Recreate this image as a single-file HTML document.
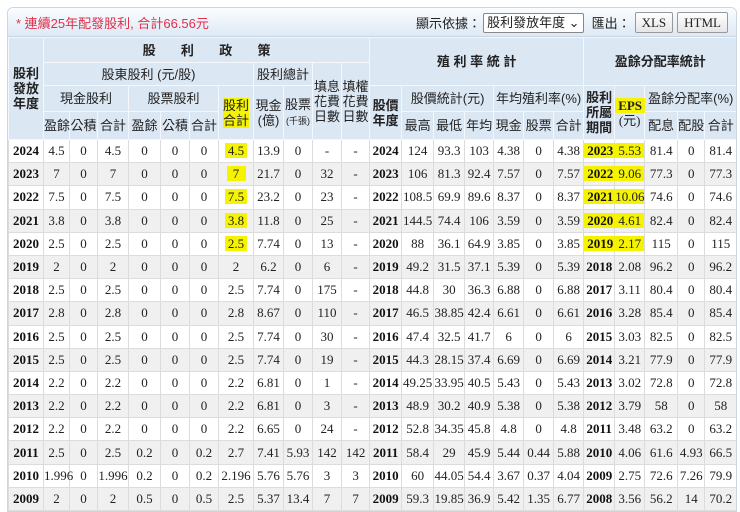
<!DOCTYPE html>
<html><head><meta charset="utf-8"><style>
body{margin:0;background:#fff;width:740px;height:511px;overflow:hidden;font-family:"Liberation Serif","Noto Serif CJK SC",serif;}
.box{position:absolute;left:7px;top:7px;width:728px;border:1px solid #c9d6e3;border-radius:6px 6px 0 0;overflow:hidden;}
.bar{height:28px;background:linear-gradient(#fbfdff,#dde9f5);position:relative;border-bottom:1px solid #c8d6e4;}
.bar .t{position:absolute;left:8px;top:5px;color:#e0304a;font-size:13px;font-family:"Liberation Sans","Noto Sans CJK TC",sans-serif;}
.bar .r{position:absolute;right:8px;top:4px;font-size:13px;font-family:"Liberation Sans","Noto Sans CJK TC",sans-serif;color:#222;display:flex;align-items:center;}
.sel{border:1px solid #888;background:#fff;padding:0 3px;height:18px;line-height:18px;margin:0 8px 0 2px;border-radius:2px;}
.btn{border:1px solid #999;background:linear-gradient(#fff,#e6e6e6);padding:0 6px;height:19px;line-height:19px;margin-left:4px;font-family:"Liberation Serif",serif;border-radius:2px;}
table{border-collapse:collapse;table-layout:fixed;width:728px;}
th{background:#dbe7f3;border:1px solid #f4f8fc;font-weight:normal;font-size:13px;color:#222;font-family:"Liberation Sans","Noto Sans CJK TC",sans-serif;line-height:15px;padding:0;white-space:nowrap;overflow:visible;}
th.b{font-weight:bold}
td{border:1px solid #dcdcdc;text-align:center;font-size:13px;height:22.2px;padding:0;color:#222;white-space:nowrap;}
td:first-child,td.y{font-weight:bold;color:#111}
tr.g td{background:#f0f0f0}
.h{background:#f5f300;padding:0 3px}
small{font-size:9px}
</style></head><body>
<div class="box">
<div class="bar"><span class="t">* 連續25年配發股利, 合計66.56元</span>
<span class="r">顯示依據：<span class="sel">股利發放年度 ⌄</span>匯出：<span class="btn">XLS</span><span class="btn">HTML</span></span></div>
<table>
<colgroup><col style="width:35px"><col style="width:26px"><col style="width:28px"><col style="width:31px"><col style="width:32px"><col style="width:29px"><col style="width:29px"><col style="width:35px"><col style="width:30px"><col style="width:29px"><col style="width:29px"><col style="width:28px"><col style="width:32px"><col style="width:32px"><col style="width:31px"><col style="width:29px"><col style="width:30px"><col style="width:30px"><col style="width:30px"><col style="width:31px"><col style="width:30px"><col style="width:33px"><col style="width:27px"><col style="width:32px"></colgroup>
<tr style="height:25px"><th rowspan="4" class="b">股利<br>發放<br>年度</th><th colspan="11" class="b">股&nbsp;&nbsp;&nbsp;&nbsp;&nbsp;&nbsp;&nbsp;利&nbsp;&nbsp;&nbsp;&nbsp;&nbsp;&nbsp;&nbsp;政&nbsp;&nbsp;&nbsp;&nbsp;&nbsp;&nbsp;&nbsp;策</th><th colspan="7" rowspan="2" class="b">殖 利 率 統 計</th><th colspan="5" rowspan="2" class="b">盈餘分配率統計</th></tr>
<tr style="height:23px"><th colspan="7">股東股利 (元/股)</th><th colspan="2">股利總計</th><th rowspan="3">填息<br>花費<br>日數</th><th rowspan="3">填權<br>花費<br>日數</th></tr>
<tr style="height:26px"><th colspan="3">現金股利</th><th colspan="3">股票股利</th><th rowspan="2"><span class="h" style="padding:0">股利<br>合計</span></th><th rowspan="2">現金<br>(億)</th><th rowspan="2">股票<br><small>(千張)</small></th><th rowspan="2" class="b">股價<br>年度</th><th colspan="3">股價統計(元)</th><th colspan="3">年均殖利率(%)</th><th rowspan="2" class="b">股利<br>所屬<br>期間</th><th rowspan="2" style="font-family:'Liberation Serif',serif"><span class="h" style="font-weight:bold">EPS</span><br>(元)</th><th colspan="3">盈餘分配率(%)</th></tr>
<tr style="height:28px"><th>盈餘</th><th>公積</th><th>合計</th><th>盈餘</th><th>公積</th><th>合計</th><th>最高</th><th>最低</th><th>年均</th><th>現金</th><th>股票</th><th>合計</th><th>配息</th><th>配股</th><th>合計</th></tr>
<tr><td>2024</td><td>4.5</td><td>0</td><td>4.5</td><td>0</td><td>0</td><td>0</td><td><span class="h">4.5</span></td><td>13.9</td><td>0</td><td>-</td><td>-</td><td class="y">2024</td><td>124</td><td>93.3</td><td>103</td><td>4.38</td><td>0</td><td>4.38</td><td class="y"><span class="h">2023</span></td><td><span class="h">5.53</span></td><td>81.4</td><td>0</td><td>81.4</td></tr>
<tr class="g"><td>2023</td><td>7</td><td>0</td><td>7</td><td>0</td><td>0</td><td>0</td><td><span class="h">&nbsp;7&nbsp;</span></td><td>21.7</td><td>0</td><td>32</td><td>-</td><td class="y">2023</td><td>106</td><td>81.3</td><td>92.4</td><td>7.57</td><td>0</td><td>7.57</td><td class="y"><span class="h">2022</span></td><td><span class="h">9.06</span></td><td>77.3</td><td>0</td><td>77.3</td></tr>
<tr><td>2022</td><td>7.5</td><td>0</td><td>7.5</td><td>0</td><td>0</td><td>0</td><td><span class="h">7.5</span></td><td>23.2</td><td>0</td><td>23</td><td>-</td><td class="y">2022</td><td>108.5</td><td>69.9</td><td>89.6</td><td>8.37</td><td>0</td><td>8.37</td><td class="y"><span class="h">2021</span></td><td><span class="h" style="padding:0">10.06</span></td><td>74.6</td><td>0</td><td>74.6</td></tr>
<tr class="g"><td>2021</td><td>3.8</td><td>0</td><td>3.8</td><td>0</td><td>0</td><td>0</td><td><span class="h">3.8</span></td><td>11.8</td><td>0</td><td>25</td><td>-</td><td class="y">2021</td><td>144.5</td><td>74.4</td><td>106</td><td>3.59</td><td>0</td><td>3.59</td><td class="y"><span class="h">2020</span></td><td><span class="h">4.61</span></td><td>82.4</td><td>0</td><td>82.4</td></tr>
<tr><td>2020</td><td>2.5</td><td>0</td><td>2.5</td><td>0</td><td>0</td><td>0</td><td><span class="h">2.5</span></td><td>7.74</td><td>0</td><td>13</td><td>-</td><td class="y">2020</td><td>88</td><td>36.1</td><td>64.9</td><td>3.85</td><td>0</td><td>3.85</td><td class="y"><span class="h">2019</span></td><td><span class="h">2.17</span></td><td>115</td><td>0</td><td>115</td></tr>
<tr class="g"><td>2019</td><td>2</td><td>0</td><td>2</td><td>0</td><td>0</td><td>0</td><td>2</td><td>6.2</td><td>0</td><td>6</td><td>-</td><td class="y">2019</td><td>49.2</td><td>31.5</td><td>37.1</td><td>5.39</td><td>0</td><td>5.39</td><td class="y">2018</td><td>2.08</td><td>96.2</td><td>0</td><td>96.2</td></tr>
<tr><td>2018</td><td>2.5</td><td>0</td><td>2.5</td><td>0</td><td>0</td><td>0</td><td>2.5</td><td>7.74</td><td>0</td><td>175</td><td>-</td><td class="y">2018</td><td>44.8</td><td>30</td><td>36.3</td><td>6.88</td><td>0</td><td>6.88</td><td class="y">2017</td><td>3.11</td><td>80.4</td><td>0</td><td>80.4</td></tr>
<tr class="g"><td>2017</td><td>2.8</td><td>0</td><td>2.8</td><td>0</td><td>0</td><td>0</td><td>2.8</td><td>8.67</td><td>0</td><td>110</td><td>-</td><td class="y">2017</td><td>46.5</td><td>38.85</td><td>42.4</td><td>6.61</td><td>0</td><td>6.61</td><td class="y">2016</td><td>3.28</td><td>85.4</td><td>0</td><td>85.4</td></tr>
<tr><td>2016</td><td>2.5</td><td>0</td><td>2.5</td><td>0</td><td>0</td><td>0</td><td>2.5</td><td>7.74</td><td>0</td><td>30</td><td>-</td><td class="y">2016</td><td>47.4</td><td>32.5</td><td>41.7</td><td>6</td><td>0</td><td>6</td><td class="y">2015</td><td>3.03</td><td>82.5</td><td>0</td><td>82.5</td></tr>
<tr class="g"><td>2015</td><td>2.5</td><td>0</td><td>2.5</td><td>0</td><td>0</td><td>0</td><td>2.5</td><td>7.74</td><td>0</td><td>19</td><td>-</td><td class="y">2015</td><td>44.3</td><td>28.15</td><td>37.4</td><td>6.69</td><td>0</td><td>6.69</td><td class="y">2014</td><td>3.21</td><td>77.9</td><td>0</td><td>77.9</td></tr>
<tr><td>2014</td><td>2.2</td><td>0</td><td>2.2</td><td>0</td><td>0</td><td>0</td><td>2.2</td><td>6.81</td><td>0</td><td>1</td><td>-</td><td class="y">2014</td><td>49.25</td><td>33.95</td><td>40.5</td><td>5.43</td><td>0</td><td>5.43</td><td class="y">2013</td><td>3.02</td><td>72.8</td><td>0</td><td>72.8</td></tr>
<tr class="g"><td>2013</td><td>2.2</td><td>0</td><td>2.2</td><td>0</td><td>0</td><td>0</td><td>2.2</td><td>6.81</td><td>0</td><td>3</td><td>-</td><td class="y">2013</td><td>48.9</td><td>30.2</td><td>40.9</td><td>5.38</td><td>0</td><td>5.38</td><td class="y">2012</td><td>3.79</td><td>58</td><td>0</td><td>58</td></tr>
<tr><td>2012</td><td>2.2</td><td>0</td><td>2.2</td><td>0</td><td>0</td><td>0</td><td>2.2</td><td>6.65</td><td>0</td><td>24</td><td>-</td><td class="y">2012</td><td>52.8</td><td>34.35</td><td>45.8</td><td>4.8</td><td>0</td><td>4.8</td><td class="y">2011</td><td>3.48</td><td>63.2</td><td>0</td><td>63.2</td></tr>
<tr class="g"><td>2011</td><td>2.5</td><td>0</td><td>2.5</td><td>0.2</td><td>0</td><td>0.2</td><td>2.7</td><td>7.41</td><td>5.93</td><td>142</td><td>142</td><td class="y">2011</td><td>58.4</td><td>29</td><td>45.9</td><td>5.44</td><td>0.44</td><td>5.88</td><td class="y">2010</td><td>4.06</td><td>61.6</td><td>4.93</td><td>66.5</td></tr>
<tr><td>2010</td><td>1.996</td><td>0</td><td>1.996</td><td>0.2</td><td>0</td><td>0.2</td><td>2.196</td><td>5.76</td><td>5.76</td><td>3</td><td>3</td><td class="y">2010</td><td>60</td><td>44.05</td><td>54.4</td><td>3.67</td><td>0.37</td><td>4.04</td><td class="y">2009</td><td>2.75</td><td>72.6</td><td>7.26</td><td>79.9</td></tr>
<tr class="g"><td>2009</td><td>2</td><td>0</td><td>2</td><td>0.5</td><td>0</td><td>0.5</td><td>2.5</td><td>5.37</td><td>13.4</td><td>7</td><td>7</td><td class="y">2009</td><td>59.3</td><td>19.85</td><td>36.9</td><td>5.42</td><td>1.35</td><td>6.77</td><td class="y">2008</td><td>3.56</td><td>56.2</td><td>14</td><td>70.2</td></tr>
</table>
</div>
</body></html>
